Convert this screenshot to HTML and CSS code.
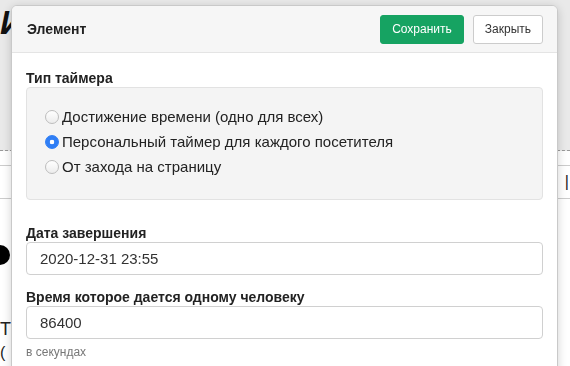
FILE: index.html
```html
<!DOCTYPE html>
<html>
	<head>
		<meta charset="utf-8">
		<link rel="stylesheet" href="styles.css">
		<title>Элемент</title>
	</head>
	<body>
		<div class="page">
			<div class="page-head">
				<div class="page-title">И</div>
			</div>
			<div class="page-row">
				<div class="page-field">|</div>
			</div>
			<div class="page-dot"></div>
			<div class="page-text">Т</div>
			<div class="page-text small">(</div>
		</div>

		<div class="modal">
			<div class="modal-header">
				<div class="modal-title">Элемент</div>
				<div class="modal-buttons">
					<button class="btn btn-save">Сохранить</button>
					<button class="btn btn-close">Закрыть</button>
				</div>
			</div>
			<div class="modal-body">
				<div class="label">Тип таймера</div>
				<div class="well">
					<label class="radio"><input type="radio" name="timer">Достижение времени (одно для всех)</label>
					<label class="radio"><input type="radio" name="timer" checked>Персональный таймер для каждого посетителя</label>
					<label class="radio"><input type="radio" name="timer">От захода на страницу</label>
				</div>
				<div class="label">Дата завершения</div>
				<input class="field" type="text" value="2020-12-31 23:55">
				<div class="label">Время которое дается одному человеку</div>
				<input class="field" type="text" value="86400">
				<div class="help">в секундах</div>
			</div>
		</div>
	</body>
</html>
```

FILE: styles.css
```css
body { margin:0; font-family:"Liberation Sans", Arial, sans-serif; font-size:14px; color:#222; background:#fff; overflow:hidden; }

.page-head { height:150px; background:#e9e9e9; border-bottom:1px dashed #999; }
.page-title { font-size:34px; font-weight:bold; font-style:italic; line-height:40px; padding-top:2px; color:#111; }
.page-row { margin-top:14px; height:32px; border-top:1px solid #ccc; border-bottom:1px solid #ccc; }
.page-field { text-align:right; line-height:32px; font-size:16px; padding-right:1px; color:#222; }
.page-dot { width:20px; height:20px; border-radius:50%; background:#000; margin:46px 0 0 -10px; }
.page-text { font-size:18px; margin-top:54px; color:#222; }
.page-text.small { margin-top:4px; font-size:16px; }

.modal { position:fixed; left:11px; top:5px; width:545px; height:400px; background:#fff; border:1px solid #c9c9c9; border-radius:6px; box-shadow:0 2px 10px rgba(0,0,0,0.18); overflow:hidden; }
.modal-header { display:flex; justify-content:space-between; align-items:center; height:46px; padding:0 14px 0 15px; background:#f6f6f6; border-bottom:1px solid #e4e4e4; }
.modal-title { font-size:14px; font-weight:bold; color:#222; }
.modal-buttons { display:flex; gap:9px; }
.btn { font-family:"Liberation Sans", Arial, sans-serif; font-size:12px; height:29px; padding:0 11px; border-radius:3px; cursor:pointer; }
.btn-save { background:#16a362; color:#fff; border:1px solid #16a362; }
.btn-close { background:#fff; color:#333; border:1px solid #ccc; }

.modal-body { padding:16px 14px 0 14px; }
.label { font-weight:bold; font-size:14px; line-height:18px; }
.well { background:#f4f4f4; border:1px solid #e2e2e2; border-radius:4px; padding:19px 18px 22px 18px; margin-bottom:24px; display:flex; flex-direction:column; gap:5px; }
.radio { display:flex; align-items:center; line-height:20px; font-size:15px; color:#222; }
.radio input { appearance:none; -webkit-appearance:none; box-sizing:border-box; width:14px; height:14px; margin:0 3px 0 0; border-radius:50%; border:1px solid #bdbdbd; background:linear-gradient(#fff, #ececec); }
.radio input:checked { border-color:#2f7ef5; background:radial-gradient(circle, #fff 0, #fff 2px, #2f7ef5 2.6px); }
.field { display:block; box-sizing:border-box; width:100%; height:33px; padding:0 13px; border:1px solid #d0d0d0; border-radius:4px; font-family:"Liberation Sans", Arial, sans-serif; font-size:15px; color:#333; margin-bottom:13px; }
.help { font-size:12px; line-height:14px; color:#777; margin-top:-7px; }
```
